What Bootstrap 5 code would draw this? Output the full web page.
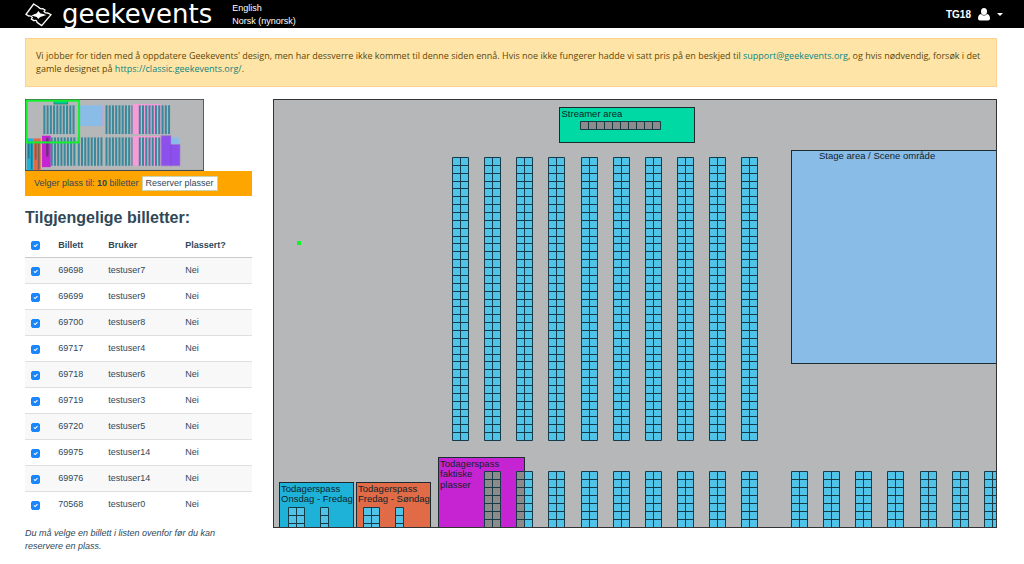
<!DOCTYPE html>
<html lang="no">
<head>
<meta charset="utf-8">
<meta name="viewport" content="width=device-width, initial-scale=1">
<title>Geekevents</title>
<link href="https://cdn.jsdelivr.net/npm/bootstrap@5.3.0/dist/css/bootstrap.min.css" rel="stylesheet">
<style>
  body { font: 9px/13px "Liberation Sans", Arial, sans-serif; color: #2f4858; background: #fff; }
  a { text-decoration: none; }
  .topbar { background: #000; height: 28px; padding: 0 21px 0 25px; }
  .topbar a, .topbar button { color: #fff; }
  .wordmark { font: 26px/26px "DejaVu Sans", sans-serif; margin-left: 10px; }
  .logo-mark { width: 27px; height: 25px; }
  .languages { margin-left: 20px; padding-top: 1px; }
  .account { font-size: 10px; line-height: 13px; gap: 7px; padding-top: 1px; }
  .page { padding: 10px 27px 0 25px; }
  .notice { font-family: "Open Sans", "Liberation Sans", sans-serif; background: #ffe4a7; border: 1px solid #ffd191; border-radius: 0; color: #5e4708; padding: 10px 10px 11px; margin-bottom: 12px; }
  .notice a { color: #0a8580; }
  .planner { display: grid; grid-template-columns: minmax(0, 227fr) minmax(0, 724fr); column-gap: 21px; align-items: start; }
  .overview { width: 79%; }
  .reserve-bar { background: #ffa500; padding: 4px 9px; height: 25px; gap: 3px; }
  .reserve-bar button { font-size: 9px; line-height: 13px; background: #fff; color: #2f4858; border: 1px solid #c9d3b4; padding: 0 3px; }
  .side-title { font: bold 16px/22px "Liberation Sans", sans-serif; margin: 11px 0 4px; }
  .tickets { --bs-table-striped-bg: #f8f8f8; --bs-table-color: #2f4858; --bs-table-striped-color: #2f4858; color: #2f4858; border-color: #dedfe0; table-layout: fixed; margin: 0 0 10px; }
  .tickets th, .tickets td { height: 26px; padding: 0 0 0 6px; vertical-align: middle; }
  .tickets thead th { height: 25px; border-bottom: 1px solid #c8cccf; }
  .tickets tbody tr:last-child td { height: 25px; border-bottom: 0; }
  .tickets .form-check-input { display: block; width: 9px; height: 9px; margin: 1px 0 0; border-radius: 2px; }
  .form-check-input:checked { background-color: #1a86fb; border-color: #1a86fb; }
  .w-tick { width: 12%; } .w-ticket { width: 22%; } .w-user { width: 34%; }
  svg text { font-family: "Liberation Sans", sans-serif; font-size: 19px; fill: #10242c; }
</style>
</head>
<body>
<header class="topbar d-flex align-items-center">
  <a href="#" class="d-flex align-items-center" aria-label="Geekevents">
    <svg class="logo-mark" viewBox="0 0 81 75" fill="none" stroke="#fff" stroke-width="4" stroke-linejoin="miter">
      <path d="M26 6 L40 15 Q46 22 53 20 L60 24 L57 29 Q61 34 68 33 L78 38 L50 71 L36 61 Q36 53 27 56 L19 51 L22 46 Q18 41 11 42 L3 37 Z"/>
      <path d="M25 40 L36 36 L40 30 L45 36 L57 39 L45 43 L40 48 L36 43 Z" fill="#fff"/>
    </svg>
    <span class="wordmark">geekevents</span>
  </a>
  <nav class="languages d-flex flex-column" aria-label="Språk"><a href="#">English</a><a href="#">Norsk (nynorsk)</a></nav>
  <button type="button" class="account btn px-0 pb-0 border-0 ms-auto d-flex align-items-center fw-bold" aria-label="TG18">
    <span>TG18</span>
    <svg width="12" height="13" viewBox="0 0 24 26" fill="#fff"><ellipse cx="12" cy="7" rx="6" ry="7"/><path d="M6 12Q12 18 18 12Q24 13 24 21Q24 25 20 25H4Q0 25 0 21Q0 13 6 12Z"/></svg>
    <svg width="6" height="3" viewBox="0 0 6 3" fill="#fff"><path d="M0 0H6L3 3Z"/></svg>
  </button>
</header>

<main class="page">
  <div class="alert notice" role="alert">Vi jobber for tiden med å oppdatere Geekevents' design, men har dessverre ikke kommet til denne siden ennå. Hvis noe ikke fungerer hadde vi satt pris på en beskjed til <a href="#">support@geekevents.org</a>, og hvis nødvendig, forsøk i det gamle designet på <a href="#">https://classic.geekevents.org/</a>.</div>

  <div class="planner">
    <aside>
      <svg class="overview d-block" viewBox="0 0 537 215" role="img" aria-label="Oversiktskart">
        <rect x="1" y="1" width="534" height="213" fill="#b6b7b9" stroke="#444" stroke-width="3"/>
        <rect x="87" y="5" width="41" height="10" fill="#00c99a" stroke="#226b5c" stroke-width="2"/>
        <rect x="165" y="19" width="67" height="62" fill="#8abce8"/>
        <path d="M233 19V81" stroke="#b9a5dc" stroke-width="3"/>
        <rect x="5" y="118" width="21" height="95" fill="#1eb2d8"/>
        <rect x="27" y="118" width="20" height="95" fill="#e06b46"/>
        <path d="M11 128V178M20 128V210" stroke="#297589" stroke-width="5"/>
        <path d="M32 128V182M41 128V210" stroke="#7b6058" stroke-width="5"/>
        <rect x="51" y="110" width="26" height="94" fill="#c623d2"/>
        <g id="overviewRows"></g>
        <path d="M67 116V172" stroke="#693273" stroke-width="7"/>
        <path d="M408 110H437V136H464V200H408Z" fill="#8c50ec" stroke="#9a76c8" stroke-width="2"/>
        <path d="M437 136V200" stroke="#8044d8" stroke-width="2"/>
        <rect x="438" y="115" width="23" height="20" fill="#8abce8"/>
        <rect x="5" y="5" width="157" height="125" fill="none" stroke="#10f32c" stroke-width="6"/>
      </svg>
      <div class="reserve-bar d-flex align-items-center"><span>Velger plass til: <b>10</b> billetter</span><button type="button">Reserver plasser</button></div>

      <h2 class="side-title">Tilgjengelige billetter:</h2>
      <table class="table table-striped tickets">
        <thead><tr><th class="w-tick"><input class="form-check-input" type="checkbox" checked aria-label="Velg alle"></th><th class="w-ticket">Billett</th><th class="w-user">Bruker</th><th>Plassert?</th></tr></thead>
        <tbody id="ticketRows"></tbody>
      </table>
      <p class="fst-italic m-0 pe-3">Du må velge en billett i listen ovenfor før du kan reservere en plass.</p>
    </aside>

    <svg class="d-block w-100" viewBox="0 0 1448 858" role="img" aria-label="Plasskart">
      <rect x="1" y="1" width="1446" height="856" fill="#b6b7b9"/>
      <g stroke="#1c2b30" stroke-width="2">
        <rect x="573" y="17" width="270" height="70" fill="#00d9a3"/>
        <rect x="1037" y="103" width="440" height="426" fill="#8abce8"/>
        <rect x="13" y="767" width="148" height="100" fill="#1eb2d8"/>
        <rect x="167" y="767" width="148" height="100" fill="#e06b46"/>
        <rect x="331" y="717" width="172" height="150" fill="#c623d2"/>
      </g>
      <g id="seatBlocks"></g>
      <rect x="48" y="284" width="8" height="8" fill="#10f32c"/>
      <text x="577" y="35">Streamer area</text>
      <text x="1092" y="120">Stage area / Scene område</text>
      <text x="16" y="785">Todagerspass<tspan x="16" dy="21">Onsdag - Fredag</tspan></text>
      <text x="170" y="785">Todagerspass<tspan x="170" dy="21">Fredag - Søndag</tspan></text>
      <text x="334" y="735">Todagerspass<tspan x="334" dy="21">faktiske</tspan><tspan x="334" dy="21">plasser</tspan></text>
      <rect x="1" y="1" width="1446" height="856" fill="none" stroke="#333" stroke-width="2"/>
    </svg>
  </div>
</main>

<script src="https://cdn.jsdelivr.net/npm/bootstrap@5.3.0/dist/js/bootstrap.bundle.min.js"></script>
<script>
  const tickets = [[69698, 7], [69699, 9], [69700, 8], [69717, 4], [69718, 6], [69719, 3], [69720, 5], [69975, 14], [69976, 14], [70568, 0]];
  document.getElementById('ticketRows').innerHTML = tickets.map(([id, user]) =>
    `<tr><td><input class="form-check-input" type="checkbox" checked id="t${id}" aria-label="Billett ${id}"></td><td><label for="t${id}">${id}</label></td><td>testuser${user}</td><td>Nei</td></tr>`).join('');

  // Seats snap to the two-unit raster so that their borders stay sharp.
  const FREE = '#4fc3e8', CLOSED = '#8b8b8b';
  const snap = v => Math.round(v / 2) * 2 + 1;
  function seats(x, y, cols, rows, fill, pitch = 16) {
    const left = snap(x), top = snap(y), bottom = snap(y + rows * pitch);
    let d = `M${left} ${top}H${left + cols * 16}V${bottom}H${left}Z`;
    for (let c = 1; c < cols; c++) d += `M${left + c * 16} ${top}V${bottom}`;
    for (let r = 1; r < rows; r++) d += `M${left} ${snap(y + r * pitch)}H${left + cols * 16}`;
    return `<path d="${d}" fill="${fill}" stroke="#173a47" stroke-width="2"/>`;
  }
  let map = seats(614, 44, 10, 1, CLOSED);
  for (let i = 0; i < 10; i++) map += seats(358 + i * 64.3, 116, 2, 36, FREE, 566 / 36);
  for (let i = 3; i < 10; i++) map += seats(358 + i * 64.3, 744, 2, 7, FREE);
  for (let i = 0; i < 7; i++) map += seats(1036 + i * 64.3, 744, 2, 7, FREE);
  map += seats(422, 744, 2, 7, CLOSED) + seats(486, 744, 1, 7, CLOSED) + seats(502, 744, 1, 7, FREE);
  map += seats(30, 816, 2, 3, FREE) + seats(94, 816, 1, 3, FREE) + seats(180, 816, 2, 3, FREE) + seats(244, 816, 1, 3, FREE);
  document.getElementById('seatBlocks').innerHTML = map;

  // Each group: first row, number of rows, top, bottom, gap colour.
  const groups = [[55, 10, 19, 105], [241, 9, 19, 105], [331, 8, 19, 105, '#f99bd6'], [409, 3, 19, 105],
    [77, 8, 115, 200], [158, 8, 115, 200], [241, 9, 115, 200], [331, 8, 115, 200, '#f99bd6']];
  document.getElementById('overviewRows').innerHTML = groups.map(([x, n, top, bottom, gap]) => {
    let out = gap ? `<path d="M${x - 9} ${top - 4}H${x + 75}V${bottom}H${x - 9}Z" fill="${gap}"/>` : '';
    for (let i = 0; i < n; i++)
      if (!gap || i) out += `<rect x="${x + i * 9.7}" y="${top}" width="6" height="${bottom - top}" fill="#39889c"/>`;
    return out;
  }).join('');
</script>
</body>
</html>
